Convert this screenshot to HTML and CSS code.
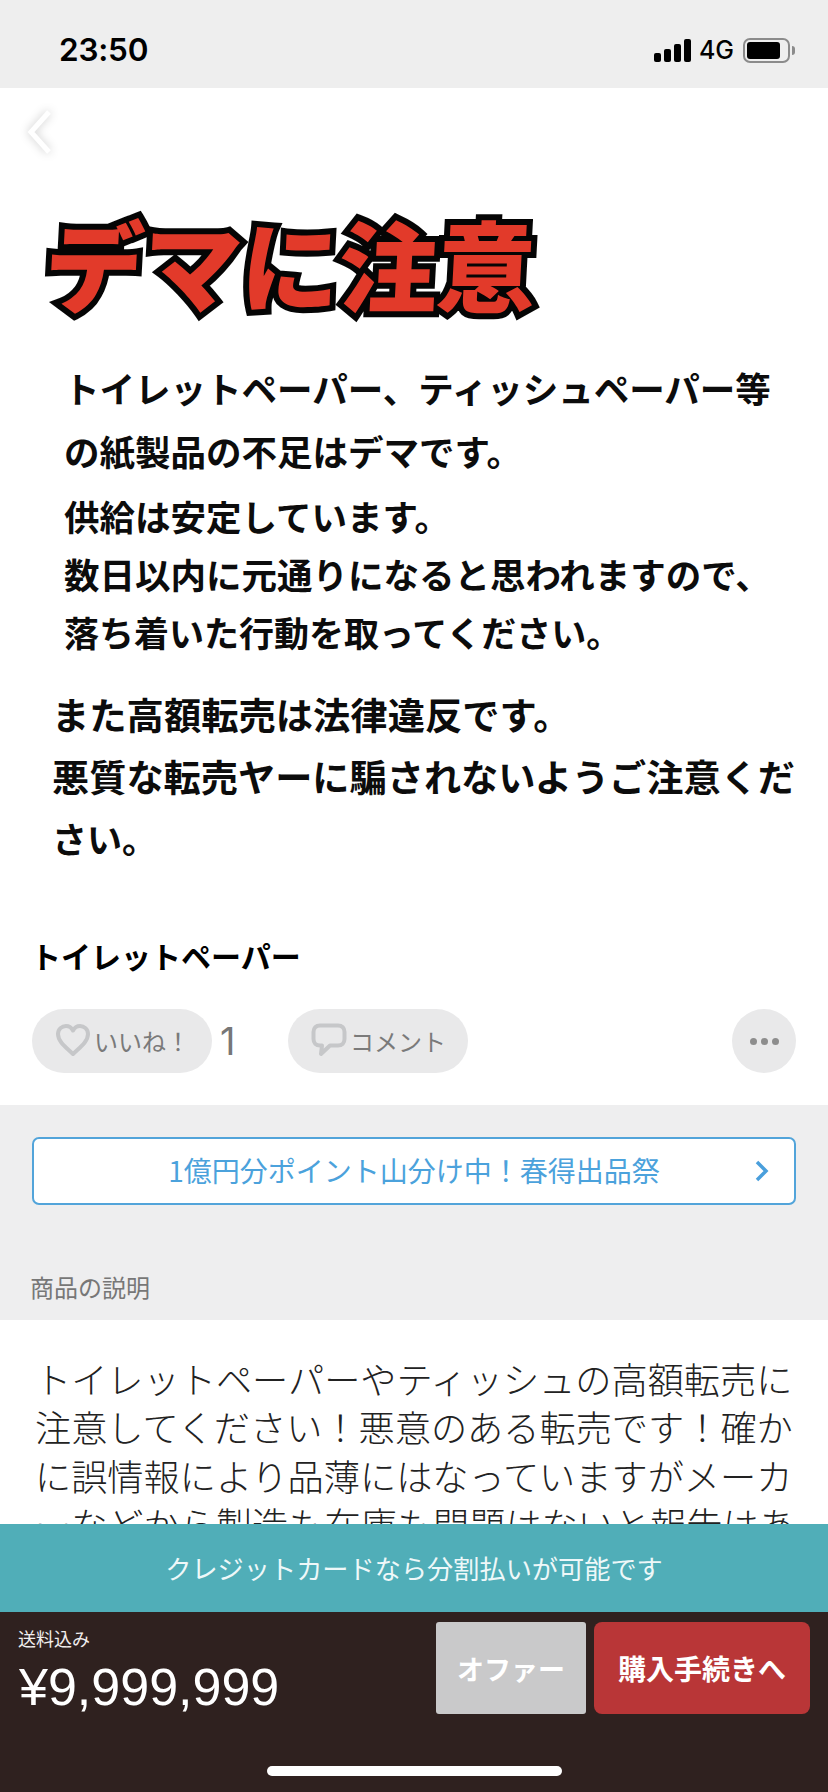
FILE: index.html
```html
<!DOCTYPE html>
<html lang="ja">
<head>
<meta charset="utf-8">
<title>トイレットペーパー</title>
<link rel="stylesheet" href="styles.css">
</head>
<body>
<div class="phone">
  <header class="status">
    <span class="time">23:50</span>
    <div class="status-right">
      <div class="signal"><i class="b1"></i><i class="b2"></i><i class="b3"></i><i class="b4"></i></div>
      <span class="net">4G</span>
      <div class="battery"><div class="battery-fill"></div></div>
      <div class="battery-cap"></div>
    </div>
  </header>

  <section class="poster">
    <svg class="back" width="30" height="48" viewBox="0 0 30 48"><path d="M24 4 L6 24 L24 44" fill="none" stroke="#fff" stroke-width="5"/></svg>
    <div class="headline">デマに注意</div>
    <div class="g1">
      <div class="ln l1">トイレットペーパー、ティッシュペーパー等</div>
      <div class="ln l2">の紙製品の不足はデマです。</div>
    </div>
    <div class="g2">
      <div class="ln l3">供給は安定しています。</div>
      <div class="ln l4">数日以内に元通りになると思われますので、</div>
      <div class="ln l5">落ち着いた行動を取ってください。</div>
    </div>
    <div class="g3">
      <div class="ln l6">また高額転売は法律違反です。</div>
      <div class="ln l7">悪質な転売ヤーに騙されないようご注意くだ</div>
      <div class="ln l8">さい。</div>
    </div>
  </section>

  <section class="info">
    <h1 class="title">トイレットペーパー</h1>
    <div class="actions">
      <div class="pill">
        <svg width="36" height="34" viewBox="0 0 36 34"><path d="M18 31 C12 25 3 19 3 11 C3 6 7 3 11 3 C14 3 16.500 4.500 18 7.500 C19.500 4.500 22 3 25 3 C29 3 33 6 33 11 C33 19 24 25 18 31 Z" fill="none" stroke="#c6c7c9" stroke-width="4" stroke-linejoin="round"/></svg>
        <span>いいね！</span>
      </div>
      <span class="count">1</span>
      <div class="pill pill-comment">
        <svg width="36" height="34" viewBox="0 0 36 34"><path d="M9 2.500 H27 C31 2.500 33.500 5 33.500 9 V16 C33.500 20 31 22.500 27 22.500 H19 L10 31 L11 22.500 H9 C5 22.500 2.500 20 2.500 16 V9 C2.500 5 5 2.500 9 2.500 Z" fill="none" stroke="#c6c7c9" stroke-width="4" stroke-linejoin="round"/></svg>
        <span>コメント</span>
      </div>
      <div class="more"><i></i><i></i><i></i></div>
    </div>
  </section>

  <section class="gray">
    <div class="banner">
      <span>1億円分ポイント山分け中！春得出品祭</span>
      <svg class="banner-arrow" width="16" height="24" viewBox="0 0 16 24"><path d="M3 3 L12 12 L3 21" fill="none" stroke="#4a9fdc" stroke-width="3.500"/></svg>
    </div>
    <div class="label">商品の説明</div>
  </section>

  <section class="desc">トイレットペーパーやティッシュの高額転売に注意してください！悪意のある転売です！確かに誤情報により品薄にはなっていますがメーカーなどから製造も在庫も問題はないと報告はあ</section>

  <footer class="dock">
    <div class="notice">クレジットカードなら分割払いが可能です</div>
    <div class="buybar">
      <div class="price-box">
        <div class="ship">送料込み</div>
        <div class="price">¥9,999,999</div>
      </div>
      <div class="btn btn-offer">オファー</div>
      <div class="btn btn-buy">購入手続きへ</div>
      <div class="home"></div>
    </div>
  </footer>
</div>
</body>
</html>
```

FILE: styles.css
```css
* { box-sizing: border-box; }
html, body { margin: 0; padding: 0; }
body {
  background: #fff;
  font-family: "Noto Sans CJK JP", "Noto Sans", sans-serif;
}
.phone {
  position: relative;
  width: 828px;
  height: 1792px;
  overflow: hidden;
  background: #fff;
}

/* status bar */
.status {
  height: 88px;
  background: #eeeeee;
  display: flex;
  justify-content: space-between;
  align-items: center;
  padding: 0 33px 0 59px;
  color: #000;
}
.time {
  font-family: Inter, "Liberation Sans", sans-serif;
  font-size: 31.500px;
  font-weight: 600;
  letter-spacing: -0.2px;
  margin-top: 11px;
}
.status-right {
  display: flex;
  align-items: center;
  margin-top: 12px;
}
.signal {
  display: flex;
  align-items: flex-end;
  gap: 3px;
  height: 23px;
  margin-right: 8px;
}
.signal i { display: block; width: 7px; background: #000; border-radius: 2px; }
.b1 { height: 9px; }
.b2 { height: 13px; }
.b3 { height: 18px; }
.b4 { height: 23px; }
.net {
  font-family: Inter, "Liberation Sans", sans-serif;
  font-size: 25px;
  font-weight: 500;
  line-height: 28px;
  margin-right: 9px;
}
.battery {
  width: 47px;
  height: 25px;
  border: 2px solid #8b8b8b;
  border-radius: 7px;
  padding: 2px;
}
.battery-fill { width: 33px; height: 100%; background: #000; border-radius: 3px; }
.battery-cap {
  width: 3px;
  height: 9px;
  margin-left: 2px;
  background: #8b8b8b;
  border-radius: 0 3px 3px 0;
}

/* poster picture */
.poster {
  position: relative;
  height: 800px;
  padding-top: 120px;
  background: #fff;
  color: #0c0c0c;
  font-weight: 700;
  white-space: nowrap;
}
.back {
  position: absolute;
  left: 25px;
  top: 20px;
  filter: drop-shadow(0 0 5px rgba(0, 0, 0, 0.22));
}
.headline {
  height: 120px;
  line-height: 120px;
  padding-left: 45px;
  font-size: 99px;
  font-weight: 900;
  letter-spacing: -1px;
  color: #e23a2a;
  -webkit-text-stroke: 12px #050505;
  paint-order: stroke fill;
  transform: skewX(-3deg) translateY(-6px);
}
.g1 { margin-top: 28px; line-height: 63px; padding-left: 64px; }
.g2 { margin-top: 5px; line-height: 58px; padding-left: 64px; }
.g3 { margin-top: 22px; line-height: 62px; padding-left: 52px; }
.ln { font-size: 35.500px; }
.l5 { font-size: 35px; }
.l6 { font-size: 37.300px; }
.l7 { font-size: 37.200px; }
.l8 { font-size: 35px; }

/* title and actions */
.info {
  padding: 45px 32px 32px;
  background: #fff;
}
.title {
  margin: 0 0 0 -1px;
  font-size: 30px;
  line-height: 44px;
  font-weight: 700;
  color: #000;
}
.actions {
  display: flex;
  align-items: center;
  margin-top: 32px;
  height: 64px;
}
.pill {
  width: 180px;
  height: 64px;
  border-radius: 32px;
  background: #e9e9ea;
  display: flex;
  align-items: center;
  padding: 0 0 2px 23px;
  gap: 3px;
  font-size: 24px;
  color: #7a7a7a;
}
.pill-comment { margin-left: 41px; }
.count {
  margin-left: 8px;
  width: 27px;
  font-family: Inter, "Liberation Sans", sans-serif;
  font-size: 38px;
  font-weight: 400;
  color: #777;
}
.more {
  margin-left: auto;
  width: 64px;
  height: 64px;
  border-radius: 50%;
  background: #e9e9ea;
  display: flex;
  align-items: center;
  justify-content: center;
  gap: 4px;
}
.more i { display: block; width: 7px; height: 7px; border-radius: 50%; background: #8d8d8d; }

/* grey band */
.gray {
  height: 215px;
  background: #eeeeef;
  padding: 32px 32px 0;
}
.banner {
  position: relative;
  height: 68px;
  border: 2px solid #52a4da;
  border-radius: 7px;
  background: #fff;
  display: flex;
  align-items: center;
  justify-content: center;
  padding-bottom: 2px;
  font-size: 28px;
  color: #4ba2dc;
}
.banner-arrow { position: absolute; right: 24px; top: 20px; }
.label {
  margin-top: 64px;
  margin-left: -2px;
  font-size: 24px;
  line-height: 36px;
  color: #777;
}

/* description */
.desc {
  padding: 34px 30px 0 35px;
  font-size: 36.200px;
  line-height: 48.400px;
  font-weight: 300;
  color: #222;
  background: #fff;
  line-break: anywhere;
}

/* fixed purchase dock */
.dock {
  position: absolute;
  left: 0;
  right: 0;
  bottom: 0;
}
.notice {
  height: 88px;
  background: #50aeb8;
  color: #eef8f9;
  font-size: 26.200px;
  display: flex;
  align-items: center;
  justify-content: center;
}
.buybar {
  position: relative;
  height: 180px;
  background: #2f211f;
  display: flex;
  align-items: flex-start;
  padding: 10px 18px 0;
  color: #fff;
}
.price-box { flex: 1; }
.ship { font-size: 18px; line-height: 26px; margin-top: 3px; color: #f2eeee; }
.price {
  font-family: "Liberation Sans", Arial, sans-serif;
  font-size: 52px;
  line-height: 60px;
  margin-top: 6px;
  margin-left: 1px;
}
.btn {
  height: 92px;
  display: flex;
  align-items: center;
  justify-content: center;
  font-weight: 700;
}
.btn-offer {
  width: 150px;
  background: #c9c9ca;
  border-radius: 3px;
  font-size: 27px;
  margin-right: 8px;
}
.btn-buy {
  width: 216px;
  background: #b93637;
  border-radius: 8px;
  font-size: 28px;
}
.home {
  position: absolute;
  left: 267px;
  bottom: 16px;
  width: 295px;
  height: 10px;
  border-radius: 5px;
  background: #fff;
}
```
